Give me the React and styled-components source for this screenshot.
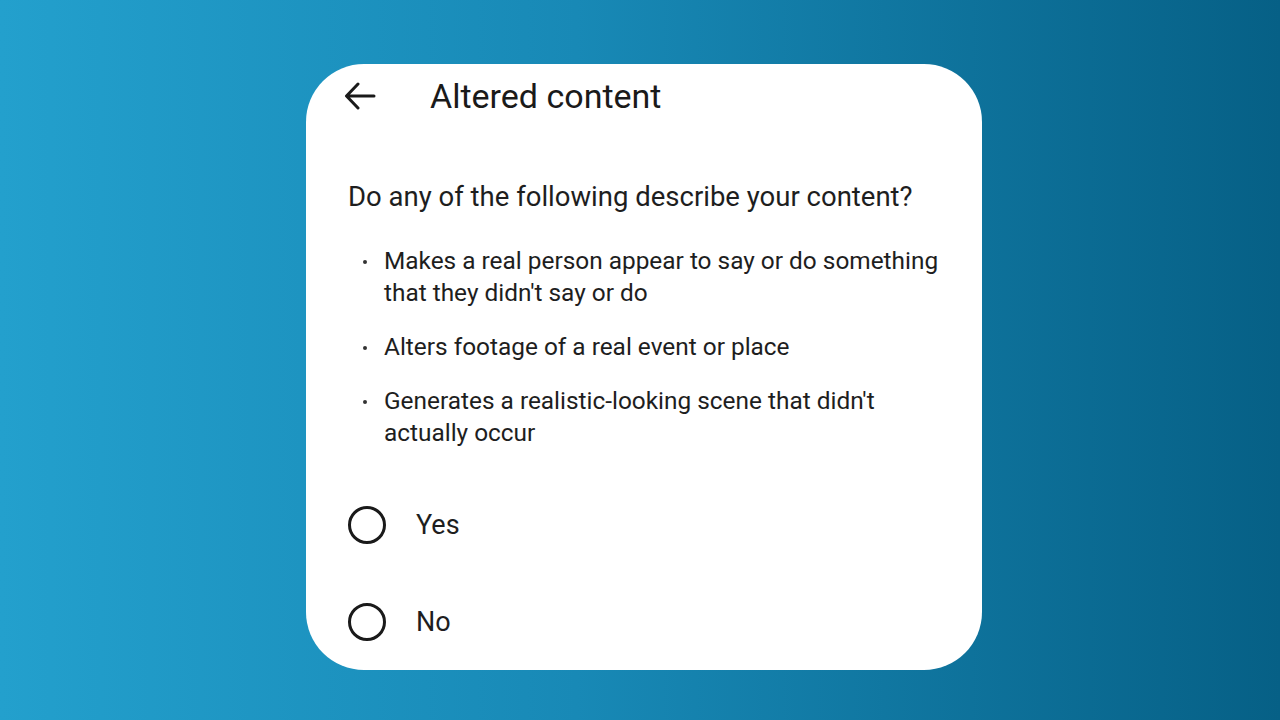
import React from "react";
import styled, { createGlobalStyle } from "styled-components";

const Global = createGlobalStyle`
  html, body { margin: 0; padding: 0; }
  body { font-family: Roboto, "Noto Sans", sans-serif; }
`;

const Page = styled.div`
  width: 1280px;
  height: 720px;
  box-sizing: border-box;
  padding: 64px 0 0 306px;
  background: linear-gradient(90deg, #23a0cd 0%, #1889b6 45%, #066086 100%);
  overflow: hidden;
`;

const Card = styled.div`
  width: 676px;
  height: 606px;
  box-sizing: border-box;
  background: #fff;
  border-radius: 58px;
  padding: 0 34px 0 42px;
  color: #1e1e1e;
  display: flex;
  flex-direction: column;
`;

const Header = styled.div`
  display: flex;
  align-items: center;
  height: 64px;
  margin-left: -4px;
`;

const BackButton = styled.div`
  width: 86px;
  display: flex;
  align-items: center;
  height: 100%;
`;

const Title = styled.h1`
  margin: 0;
  font-size: 34px;
  font-weight: 400;
  letter-spacing: 0;
  color: #1a1a1a;
`;

const Question = styled.p`
  margin: 53px 0 0 0;
  font-size: 27.5px;
  line-height: 32px;
`;

const List = styled.ul`
  list-style: none;
  margin: 32px 0 0 0;
  padding: 0;
  display: flex;
  flex-direction: column;
  gap: 22px;
`;

const Item = styled.li`
  position: relative;
  padding-left: 36px;
  font-size: 24.4px;
  line-height: 32px;
  &::before {
    content: "";
    position: absolute;
    left: 15px;
    top: 15px;
    width: 4px;
    height: 4px;
    border-radius: 50%;
    background: #333;
  }
`;

const Options = styled.div`
  display: flex;
  flex-direction: column;
  margin-top: 56px;
  gap: 57px;
`;

const Option = styled.label`
  display: flex;
  align-items: center;
  height: 40px;
  font-size: 27px;
`;

const Radio = styled.span`
  width: 32px;
  height: 32px;
  border: 3px solid #1a1a1a;
  border-radius: 50%;
  box-sizing: content-box;
  margin-right: 30px;
  flex: none;
`;

export default function App() {
  return (
    <>
      <Global />
      <Page>
        <Card>
          <Header>
            <BackButton>
              <svg width="32" height="28" viewBox="0 0 32 28" fill="none">
                <path d="M30 14H3M14 2L2.5 14L14 26" stroke="#1a1a1a" strokeWidth="3" strokeLinecap="round" strokeLinejoin="round" />
              </svg>
            </BackButton>
            <Title>Altered content</Title>
          </Header>
          <Question>Do any of the following describe your content?</Question>
          <List>
            <Item>Makes a real person appear to say or do something that they didn't say or do</Item>
            <Item>Alters footage of a real event or place</Item>
            <Item>Generates a realistic-looking scene that didn't actually occur</Item>
          </List>
          <Options>
            <Option><Radio />Yes</Option>
            <Option><Radio />No</Option>
          </Options>
        </Card>
      </Page>
    </>
  );
}
